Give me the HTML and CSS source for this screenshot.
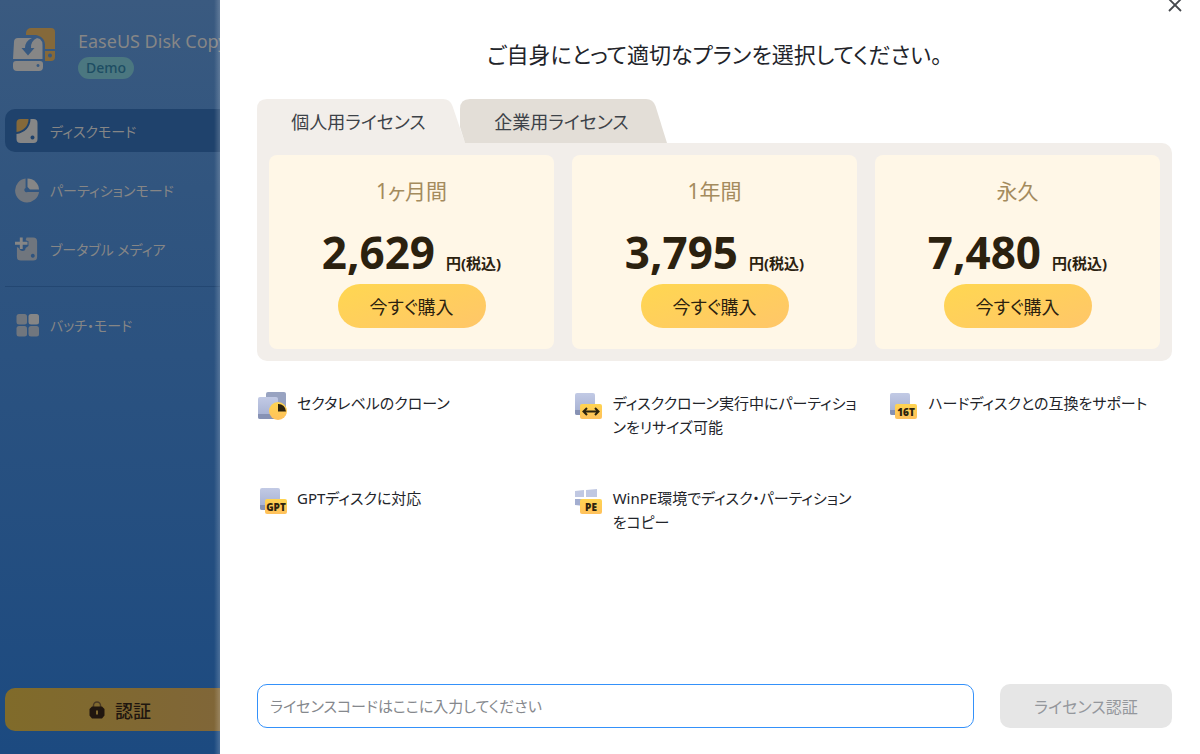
FILE: index.html
```
<!DOCTYPE html>
<html lang="ja">
<head>
<meta charset="utf-8">
<title>EaseUS Disk Copy</title>
<link rel="stylesheet" href="styles.css">
</head>
<body>
<div class="app">
  <aside class="sidebar">
    <header class="brand">
      <svg class="brand-logo" width="44" height="44" viewBox="0 0 44 44" aria-hidden="true">
        <path fill="#85693a" d="M18 0H38a4 4 0 0 1 4 4V21H32V17C32 11 28 8 23 7H13V5A5 5 0 0 1 18 0Z"/>
        <path fill="#85693a" fill-rule="evenodd" d="M32 23H42V29a4 4 0 0 1-4 4H32ZM37 25.500a2 2 0 1 0 .01 0Z"/>
        <path fill="#868686" d="M5 10H19Q12 13 12 20H8.500L15 27.500 21.500 20H18Q17.500 13 24 10L27 11Q29.500 13 29.500 17V31H0L1 14Q1 10 5 10Z"/>
        <path fill="#868686" fill-rule="evenodd" d="M3 33H27a3 3 0 0 1 3 3v3a4 4 0 0 1-4 4H4a4 4 0 0 1-4-4V36a3 3 0 0 1 3-3ZM25 36a1.500 1.500 0 1 0 .01 0Z"/>
      </svg>
      <div class="brand-text">
        <span class="brand-name">EaseUS Disk Copy</span>
        <span class="brand-badge">Demo</span>
      </div>
    </header>
    <nav class="menu">
      <a class="menu-item menu-item-active" href="#disk">
        <svg width="24" height="26" viewBox="0 0 24 26" aria-hidden="true">
          <path fill="#85693a" d="M5 1H13C13 8 8 13 1 14V5A4 4 0 0 1 5 1Z"/>
          <path fill="#868686" fill-rule="evenodd" d="M15 1H18a4 4 0 0 1 4 4V21a4 4 0 0 1-4 4H5a4 4 0 0 1-4-4V16C9 15 15 9 15 1ZM17 17.500a2 2 0 1 0 .01 0Z"/>
        </svg>
        <span>ディスクモード</span>
      </a>
      <a class="menu-item" href="#partition">
        <svg width="26" height="26" viewBox="0 0 26 26" aria-hidden="true">
          <path fill="#70767e" d="M11 1V11a2 2 0 0 0 2 4H25A12.500 12.500 0 1 1 11 1Z"/>
          <path fill="#868686" d="M13 1A12 12 0 0 1 25 12.500H15.500L13 10Z"/>
        </svg>
        <span>パーティションモード</span>
      </a>
      <a class="menu-item" href="#bootable">
        <svg width="26" height="26" viewBox="0 0 26 26" aria-hidden="true">
          <path fill="#70767e" fill-rule="evenodd" d="M12 1H19a4 4 0 0 1 4 4V21a4 4 0 0 1-4 4H6a4 4 0 0 1-4-4V11L4 12Q5 15 8 15 11 15 11 12L14 10V5L11 4ZM18.500 18a2 2 0 1 0 .01 0Z"/>
          <path fill="none" stroke="#868686" stroke-width="3" d="M6.500 1V13M0 7H13"/>
        </svg>
        <span>ブータブル メディア</span>
      </a>
      <hr class="menu-rule">
      <a class="menu-item" href="#batch">
        <svg width="24" height="24" viewBox="0 0 24 24" aria-hidden="true">
          <rect fill="#70767e" x="1" y="1" width="10.500" height="10.500" rx="2.500"/>
          <rect fill="#868686" x="13" y="1" width="10.500" height="10.500" rx="2.500"/>
          <rect fill="#70767e" x="1" y="13" width="10.500" height="10.500" rx="2.500"/>
          <rect fill="#70767e" x="13" y="13" width="10.500" height="10.500" rx="2.500"/>
        </svg>
        <span>バッチ・モード</span>
      </a>
    </nav>
    <button class="activate" type="button">
      <svg width="16" height="18" viewBox="0 0 16 18" aria-hidden="true">
        <path fill="none" stroke="#4a3a25" stroke-width="1.500" d="M4.500 7V4.500a3.500 3.500 0 0 1 7 0V7"/>
        <path fill="#20160f" fill-rule="evenodd" d="M3 5.500H13L15.500 8V14.500L13 17.500H3L.5 14.500V8ZM7 9.500V13.500H9V9.500Z"/>
      </svg>
      <span>認証</span>
    </button>
  </aside>

  <main class="plans">
    <button class="close" type="button" aria-label="閉じる">
      <svg width="14" height="14" viewBox="0 0 14 14" aria-hidden="true"><path fill="none" stroke="#45484d" stroke-width="1.800" d="M1 1 13 13M13 1 1 13"/></svg>
    </button>
    <h1 class="title">ご自身にとって適切なプランを選択してください。</h1>

    <section class="pricing">
      <div class="tabs" role="tablist">
        <button class="tab tab-personal" type="button" role="tab" aria-selected="true">
          <svg class="tab-shape" width="208" height="44" viewBox="0 0 208 44" aria-hidden="true"><path fill="#f2eeea" d="M0 44V10Q0 0 10 0H186Q193 0 195.500 7L208 44Z"/></svg>
          <span class="tab-label">個人用ライセンス</span>
        </button>
        <button class="tab tab-business" type="button" role="tab" aria-selected="false">
          <svg class="tab-shape" width="208" height="44" viewBox="0 0 208 44" aria-hidden="true"><path fill="#e3ded7" d="M0 28V10Q0 0 10 0H186Q193 0 195.500 7L207 44H5Z"/></svg>
          <span class="tab-label">企業用ライセンス</span>
        </button>
      </div>
      <div class="cards">
        <article class="card">
          <h2 class="card-title">1ヶ月間</h2>
          <p class="price"><span class="amount">2,629</span><span class="unit">円(税込)</span></p>
          <button class="buy" type="button">今すぐ購入</button>
        </article>
        <article class="card">
          <h2 class="card-title">1年間</h2>
          <p class="price"><span class="amount">3,795</span><span class="unit">円(税込)</span></p>
          <button class="buy" type="button">今すぐ購入</button>
        </article>
        <article class="card">
          <h2 class="card-title">永久</h2>
          <p class="price"><span class="amount">7,480</span><span class="unit">円(税込)</span></p>
          <button class="buy" type="button">今すぐ購入</button>
        </article>
      </div>
    </section>

    <svg class="defs" width="0" height="0" aria-hidden="true">
      <defs>
        <linearGradient id="disk" x1="0" y1="0" x2="0" y2="1"><stop offset="0" stop-color="#c2cae5"/><stop offset="1" stop-color="#a3aed0"/></linearGradient>
        <linearGradient id="gold" x1="0" y1="0" x2="0" y2="1"><stop offset="0" stop-color="#ffd451"/><stop offset="1" stop-color="#ffc15c"/></linearGradient>
      </defs>
    </svg>
    <ul class="features">
      <li class="feature">
        <svg width="30" height="30" viewBox="0 0 30 30" aria-hidden="true">
          <rect fill="#98a3c1" x="8" y="1" width="20" height="24" rx="2"/>
          <rect fill="url(#disk)" x="0" y="6" width="20" height="22" rx="2"/>
          <path fill="#8792b4" d="M0 23H20V26a2 2 0 0 1-2 2H2a2 2 0 0 1-2-2Z"/>
          <circle fill="url(#gold)" cx="20" cy="20" r="9"/>
          <path fill="#2d230e" d="M20 13A7.500 7.500 0 0 1 28 20.500H20Z"/>
        </svg>
        <span>セクタレベルのクローン</span>
      </li>
      <li class="feature">
        <svg width="30" height="30" viewBox="0 0 30 30" aria-hidden="true">
          <rect fill="url(#disk)" x="1" y="2" width="20" height="22" rx="2"/>
          <path fill="#8792b4" d="M1 19H21V22a2 2 0 0 1-2 2H3a2 2 0 0 1-2-2Z"/>
          <rect fill="url(#gold)" x="6" y="13" width="22" height="15" rx="2"/>
          <path fill="none" stroke="#2d230e" stroke-width="2" d="M10 20.500H24M13 17 9.500 20.500 13 24M21 17 24.500 20.500 21 24"/>
        </svg>
        <span>ディスククローン実行中にパーティションをリサイズ可能</span>
      </li>
      <li class="feature">
        <svg width="30" height="30" viewBox="0 0 30 30" aria-hidden="true">
          <rect fill="url(#disk)" x="1" y="2" width="20" height="22" rx="2"/>
          <path fill="#8792b4" d="M1 19H21V22a2 2 0 0 1-2 2H3a2 2 0 0 1-2-2Z"/>
          <rect fill="url(#gold)" x="6" y="13" width="22" height="15" rx="2"/>
          <text class="icon-text" x="17" y="25" text-anchor="middle">16T</text>
        </svg>
        <span>ハードディスクとの互換をサポート</span>
      </li>
      <li class="feature">
        <svg width="30" height="30" viewBox="0 0 30 30" aria-hidden="true">
          <rect fill="url(#disk)" x="2" y="2" width="20" height="22" rx="2"/>
          <path fill="#8792b4" d="M2 19H22V22a2 2 0 0 1-2 2H4a2 2 0 0 1-2-2Z"/>
          <rect fill="url(#gold)" x="7" y="13" width="22" height="15" rx="2"/>
          <text class="icon-text" x="18" y="25" text-anchor="middle">GPT</text>
        </svg>
        <span>GPTディスクに対応</span>
      </li>
      <li class="feature">
        <svg width="30" height="30" viewBox="0 0 30 30" aria-hidden="true">
          <path fill="#c0c8e2" d="M1 5 10 4V11H1ZM12 4 23 3V11H12Z"/>
          <path fill="#a3aed0" d="M1 13H10V20L1 19ZM12 13H23V20H12Z"/>
          <rect fill="url(#gold)" x="6" y="13" width="22" height="15" rx="2"/>
          <text class="icon-text" x="17" y="25" text-anchor="middle">PE</text>
        </svg>
        <span>WinPE環境でディスク・パーティションをコピー</span>
      </li>
    </ul>

    <form class="license">
      <input class="license-code" type="text" aria-label="ライセンスコード" placeholder="ライセンスコードはここに入力してください">
      <button class="license-submit" type="button" disabled>ライセンス認証</button>
    </form>
  </main>
</div>
</body>
</html>
```
FILE: styles.css
```
* { box-sizing: border-box; }

body {
  margin: 0;
  font-family: "Noto Sans", "Noto Sans CJK JP", sans-serif;
  font-feature-settings: "palt";
  font-size: 16px;
  color: #22242a;
  background: #fff;
}

button, input { font: inherit; font-feature-settings: inherit; }
button { border: 0; padding: 0; cursor: pointer; }
svg { flex: none; display: block; }

.app { display: flex; min-height: 100vh; }

/* Sidebar */
.sidebar {
  position: relative;
  flex: 0 0 220px;
  display: flex;
  flex-direction: column;
  padding: 28px 0 23px 5px;
  overflow: hidden;
  background: linear-gradient(#3a5a80, #31557f 25%, #2b5280 47%, #1c4a80);
  color: #868686;
}
.sidebar::after {
  content: "";
  position: absolute;
  top: 0;
  right: 0;
  bottom: 0;
  width: 6px;
  background: linear-gradient(90deg, rgba(255, 255, 255, 0), rgba(255, 255, 255, 0.2));
}
.brand { display: flex; gap: 21px; padding-left: 8px; height: 81px; white-space: nowrap; }
.brand-text { display: flex; flex-direction: column; align-items: flex-start; }
.brand-name { font-size: 18px; line-height: 26px; }
.brand-badge {
  margin-top: 3px;
  padding: 0 8px;
  border-radius: 11px;
  background: #4b7780;
  color: #1d4d63;
  font-size: 14px;
  font-weight: 500;
  line-height: 22px;
}
.menu { display: flex; flex-direction: column; gap: 16px; }
.menu-item {
  display: flex;
  align-items: center;
  gap: 10px;
  height: 43px;
  padding-left: 10px;
  border-radius: 10px 0 0 10px;
  color: inherit;
  font-size: 14px;
  text-decoration: none;
  white-space: nowrap;
}
.menu-item svg { width: 25px; }
.menu-item-active { background: #1f426c; }
.menu-rule { width: 100%; height: 1px; margin: 0; border: 0; background: #234772; }
.activate {
  display: flex;
  align-items: center;
  gap: 10px;
  height: 43px;
  margin-top: auto;
  padding-left: 84px;
  border-radius: 10px 0 0 10px;
  background: linear-gradient(90deg, #806b2a, #806638);
  color: #20160f;
  font-size: 18px;
  font-weight: 500;
}

/* Plans */
.plans {
  position: relative;
  flex: 1;
  min-width: 0;
  display: flex;
  flex-direction: column;
  padding: 36px 28px 26px 37px;
}
.close { position: absolute; top: -2px; right: 18px; background: none; }
.title { margin: 0; font-size: 22px; font-weight: 400; line-height: 36px; text-align: center; }
.pricing { margin-top: 27px; }
.tabs { display: flex; }
.tab { position: relative; width: 203px; height: 44px; background: none; color: #3d4248; font-size: 18px; }
.tab-shape { position: absolute; top: 0; left: 0; }
.tab-label { position: relative; }
.cards {
  display: grid;
  grid-template-columns: repeat(3, 1fr);
  gap: 18px;
  padding: 12px;
  border-radius: 0 10px 10px 10px;
  background: #f2eeea;
}
.card {
  display: flex;
  flex-direction: column;
  align-items: center;
  padding: 20px 0 21px;
  border-radius: 8px;
  background: #fff7e7;
}
.card-title { margin: 0; color: #a48b5d; font-size: 21px; font-weight: 400; line-height: 32px; }
.price {
  display: flex;
  align-items: baseline;
  gap: 11px;
  margin: 15px 0 2px;
  color: #2b210f;
  font-weight: 700;
}
.amount { font-size: 44px; line-height: 60px; }
.unit { font-size: 15px; line-height: 20px; }
.buy {
  width: 148px;
  height: 44px;
  border-radius: 22px;
  background: linear-gradient(160deg, #ffd751, #ffc669);
  color: #2b210f;
  font-size: 18px;
}
.defs { position: absolute; }
.features {
  display: grid;
  grid-template-columns: repeat(3, 1fr);
  grid-auto-rows: 95px;
  margin: 30px -32px 0 0;
  padding: 0;
  list-style: none;
}
.feature {
  display: flex;
  gap: 9px;
  padding: 0 26px 0 1px;
  font-size: 15px;
  line-height: 24px;
  line-break: anywhere;
}
.icon-text { fill: #2d230e; font-family: "Open Sans", sans-serif; font-size: 10px; font-weight: 800; }
.license { display: flex; gap: 26px; margin-top: auto; }
.license-code {
  flex: 1;
  min-width: 0;
  height: 44px;
  padding: 0 12px;
  border: 1px solid #3491fa;
  border-radius: 10px;
  outline: 0;
  font-size: 15px;
}
.license-code::placeholder { color: #85888d; opacity: 1; }
.license-submit { width: 172px; height: 44px; border-radius: 10px; background: #e6e6e6; color: #94979c; font-size: 16px; }
```
